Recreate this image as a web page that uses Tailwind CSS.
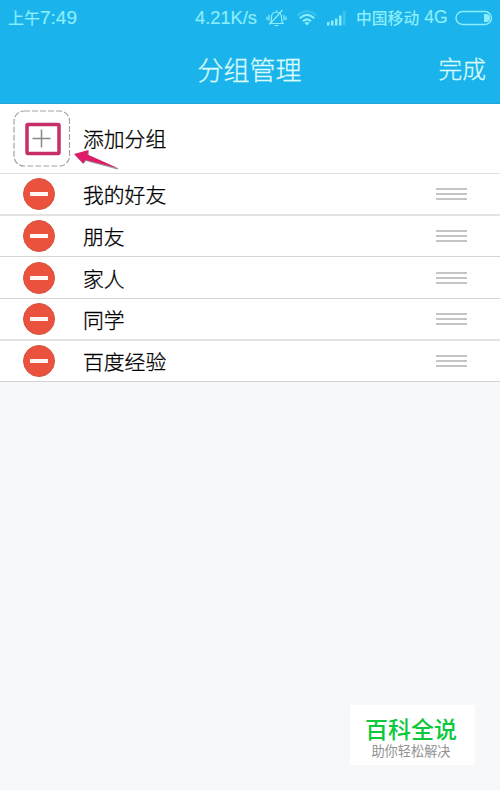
<!DOCTYPE html>
<html lang="zh-CN">
<head>
<meta charset="utf-8">
<title>分组管理</title>
<script src="https://cdn.jsdelivr.net/npm/@tailwindcss/browser@4"></script>
</head>
<body class="w-[500px] h-[790px] overflow-hidden bg-[#f7f8fa] font-['Noto_Sans_CJK_SC',sans-serif] text-black">
<div class="relative h-[790px] flex flex-col">
  <header class="h-[104px] bg-[#1ab3ec] border-b border-[#25a5d6] shrink-0">
    <div class="h-9 flex items-center pl-2 pr-[7px] text-[#8beefa] whitespace-nowrap leading-none">
      <div class="w-[187px] flex items-center pb-[2px] text-[16px] [-webkit-text-stroke:0.2px]"><span>上午</span><span class="font-['Liberation_Sans',sans-serif] text-[19px]">7:49</span></div>
      <div class="w-[71px] font-['Liberation_Sans',sans-serif] text-[18.3px] pt-px [-webkit-text-stroke:0.2px]">4.21K/s</div>
      <svg class="w-[21px] h-[20px]" viewBox="0 0 21 20" fill="none" stroke="currentColor" stroke-width="1.2"><path d="M4.500 15.500h12.500c-1.500-1.500-1.500-3-1.500-6 0-3.500-2-5.500-5-5.500s-5 2-5 5.500c0 3 0 4.500-1.500 6zM8.500 17.500h4M10.500 2.500V4M16.500 2L3.500 16.500M3 7v5.500M1 8.500V12M18 7v5.500M20 8.500V12"/></svg>
      <svg class="ml-[9px] w-[22px] h-[20px]" viewBox="0 0 22 20" fill="none" stroke="currentColor" stroke-width="2"><path d="M1.500 7.500Q11-1 20.500 7.500" opacity=".3"/><path d="M3.700 10.200Q11 3.500 18.300 10.200M7 13.200Q11 9.500 15 13.200"/><path d="M8.500 15Q11 13 13.500 15L11 17.500Z" fill="currentColor" stroke="none"/></svg>
      <svg class="ml-[8px] w-[21px] h-[20px]" viewBox="0 0 21 20" fill="currentColor"><path d="M1 14h2.500v3.500H1zM5 12.500h2.500v5H5zM9 10.500h2.500v7H9zM13 7.500h2.500v10H13z"/><path d="M17 3h2.500v14.500H17z" opacity=".3"/></svg>
      <div class="ml-[9px] w-[99px] flex items-center pb-px font-medium text-[15.800px]"><span>中国移动</span><span class="ml-[5px] font-['Liberation_Sans',sans-serif] font-normal text-[17.500px] pt-px [-webkit-text-stroke:0.2px]">4G</span></div>
      <svg class="w-[38px] h-[16px]" viewBox="0 0 38 16"><rect x="1" y="1.500" width="35.500" height="13" rx="6.500" fill="none" stroke="currentColor" stroke-width="1.400"/><path d="M29 4h2a4 4 0 0 1 0 8h-2z" fill="currentColor"/></svg>
    </div>
    <div class="h-[66px] grid grid-cols-[1fr_auto_1fr] items-center pr-[14px] text-[#d9fbfa] leading-none font-light [-webkit-text-stroke:0.3px]">
      <span></span><h1 class="text-[26px] pl-[13px]">分组管理</h1><span class="text-[23.700px] text-right">完成</span>
    </div>
  </header>

  <main class="text-[20.800px] leading-none [-webkit-text-stroke:0.3px]">
    <div class="relative h-[70px] flex items-center bg-white border-b border-[#dedfe0]">
      <svg class="ml-[13px] w-[58px] h-[57px]" viewBox="0 0 58 57" fill="none"><rect x="1" y="1" width="55.500" height="55" rx="10" stroke="#a4a4a4" stroke-width="1.200" stroke-dasharray="6 2"/><rect x="14" y="14.500" width="32" height="29" rx="1" stroke="#c72d68" stroke-width="3.500"/><path d="M19.500 28.500h18M28.500 19.500v18" stroke="#888" stroke-width="1.500"/></svg>
      <span class="ml-[12px] font-light">添加分组</span>
      <svg class="absolute left-[72px] top-[43px] w-[50px] h-[28px]" viewBox="0 0 50 28"><path d="M3 7.500L17 4L16.500 8.500L46.500 21.500L45.500 22.500L14 14L11.500 17Z" fill="#999"/><path d="M2 7L16.500 3L15.500 7.500L45.500 21L13.500 13L11 16.500Z" fill="#df1c67"/></svg>
    </div>
    <div class="h-[42px] flex items-center bg-white border-b-2 border-[#e4e4e5]">
      <svg class="ml-[23px] w-[32px] h-[32px]" viewBox="0 0 32 32"><circle cx="16" cy="16" r="15.500" fill="#eb523e" stroke="#d55341"/><path d="M7 14h18v4H7z" fill="#fff5f2"/></svg>
      <span class="ml-[28px] pt-px font-light">我的好友</span>
      <svg class="ml-auto mr-[33px] w-[31px] h-[12px]" viewBox="0 0 31 12"><path d="M0 1h31M0 6h31M0 11h31" stroke="#c4c4c4" stroke-width="2"/></svg>
    </div>
    <div class="h-[41px] flex items-center bg-white border-b border-[#d5d5d6]">
      <svg class="ml-[23px] w-[32px] h-[32px]" viewBox="0 0 32 32"><circle cx="16" cy="16" r="15.500" fill="#eb523e" stroke="#d55341"/><path d="M7 14h18v4H7z" fill="#fff5f2"/></svg>
      <span class="ml-[28px] pt-px font-light">朋友</span>
      <svg class="ml-auto mr-[33px] w-[31px] h-[12px]" viewBox="0 0 31 12"><path d="M0 1h31M0 6h31M0 11h31" stroke="#c4c4c4" stroke-width="2"/></svg>
    </div>
    <div class="h-[42px] flex items-center bg-white border-b border-[#d5d5d6]">
      <svg class="ml-[23px] w-[32px] h-[32px]" viewBox="0 0 32 32"><circle cx="16" cy="16" r="15.500" fill="#eb523e" stroke="#d55341"/><path d="M7 14h18v4H7z" fill="#fff5f2"/></svg>
      <span class="ml-[28px] pt-px font-light">家人</span>
      <svg class="ml-auto mr-[33px] w-[31px] h-[12px]" viewBox="0 0 31 12"><path d="M0 1h31M0 6h31M0 11h31" stroke="#c4c4c4" stroke-width="2"/></svg>
    </div>
    <div class="h-[42px] flex items-center bg-white border-b-2 border-[#e4e4e5]">
      <svg class="ml-[23px] w-[32px] h-[32px]" viewBox="0 0 32 32"><circle cx="16" cy="16" r="15.500" fill="#eb523e" stroke="#d55341"/><path d="M7 14h18v4H7z" fill="#fff5f2"/></svg>
      <span class="ml-[28px] pt-px font-light">同学</span>
      <svg class="ml-auto mr-[33px] w-[31px] h-[12px]" viewBox="0 0 31 12"><path d="M0 1h31M0 6h31M0 11h31" stroke="#c4c4c4" stroke-width="2"/></svg>
    </div>
    <div class="h-[41px] flex items-center bg-white border-b border-[#d5d5d6]">
      <svg class="ml-[23px] w-[32px] h-[32px]" viewBox="0 0 32 32"><circle cx="16" cy="16" r="15.500" fill="#eb523e" stroke="#d55341"/><path d="M7 14h18v4H7z" fill="#fff5f2"/></svg>
      <span class="ml-[28px] pt-px font-light">百度经验</span>
      <svg class="ml-auto mr-[33px] w-[31px] h-[12px]" viewBox="0 0 31 12"><path d="M0 1h31M0 6h31M0 11h31" stroke="#c4c4c4" stroke-width="2"/></svg>
    </div>
  </main>

  <aside class="absolute left-[350px] top-[705px] w-[125px] h-[60px] bg-white flex flex-col items-center pt-[12px] pr-[3px] leading-none whitespace-nowrap">
    <strong class="text-[23px] font-medium text-[#0bc83c]">百科全说</strong>
    <span class="mt-[4px] text-[13.200px] text-[#929292]">助你轻松解决</span>
  </aside>
</div>
</body>
</html>
